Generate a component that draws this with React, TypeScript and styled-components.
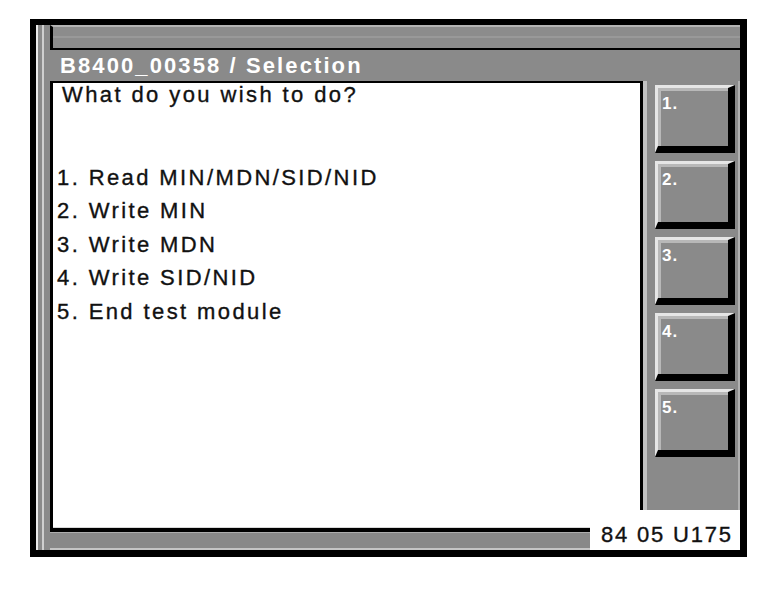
import React from "react";
import styled, { createGlobalStyle } from "styled-components";

const GlobalStyle = createGlobalStyle`
  html, body {
    margin: 0;
    padding: 0;
    background: #fff;
  }
  body {
    font-family: "Liberation Sans", Arial, sans-serif;
  }
`;

const Frame = styled.div`
  box-sizing: content-box;
  margin: 19px 0 0 30px;
  width: 704px;
  height: 525px;
  border-style: solid;
  border-color: #000;
  border-width: 6px 7px 7px 6px;
  display: flex;
  background: #8a8a8a;
`;

const Stripes = styled.div`
  flex: none;
  width: 14px;
  background: linear-gradient(
    to right,
    #ececec 0 2px,
    #8a8a8a 2px 6px,
    #cfcfcf 6px 8px,
    #8a8a8a 8px 14px
  );
`;

const Main = styled.div`
  position: relative;
  flex: 1;
  min-width: 0;
  display: flex;
  flex-direction: column;
`;

const TopBar = styled.div`
  flex: none;
  height: 21px;
  border-top: 2px solid #b4b4b4;
  border-bottom: 2px solid #000;
  border-left: 3px solid #000;
  background: linear-gradient(#8c8c8c 0 9px, #999 9px 11px, #8c8c8c 11px);
`;

const TitleBar = styled.div`
  flex: none;
  height: 31px;
  line-height: 31px;
  padding-left: 10px;
  background: #8a8a8a;
  color: #fff;
  font-weight: bold;
  font-size: 22px;
  letter-spacing: 2.1px;
  white-space: nowrap;
`;

const Body = styled.div`
  flex: 1;
  min-height: 0;
  display: flex;
`;

const Content = styled.div`
  flex: 1;
  background: #fff;
  border-style: solid;
  border-color: #000;
  border-width: 2px 3px 4px 3px;
  box-shadow: inset 0 -1px 0 #d8d8d8;
  color: #111;
  font-size: 22px;
  letter-spacing: 2.4px;
  -webkit-text-stroke: 0.35px #111;
  white-space: nowrap;
`;

const Question = styled.div`
  line-height: 24px;
  padding-left: 9px;
`;

const Options = styled.ol`
  list-style: none;
  margin: 54px 0 0;
  padding: 0 0 0 4px;
  line-height: 33.4px;
`;

const Panel = styled.div`
  flex: none;
  box-sizing: border-box;
  width: 97px;
  border-left: 4px solid #c2c2c2;
  border-right: 2px solid #b0b0b0;
  background: #8a8a8a;
  padding: 4px 3px 0 8px;
  display: flex;
  flex-direction: column;
  gap: 8px;
`;

const FKey = styled.button`
  box-sizing: border-box;
  width: 80px;
  height: 68px;
  margin: 0;
  border-style: solid;
  border-width: 3px 7px 7px 3px;
  border-color: #e6e6e6 #000 #000 #e6e6e6;
  box-shadow: inset 3px 3px 0 #b8b8b8;
  background: #8a8a8a;
  padding: 7px 0 0 4px;
  text-align: left;
  color: #fff;
  font-family: "Liberation Sans", Arial, sans-serif;
  font-weight: bold;
  font-size: 17px;
  line-height: 17px;
  letter-spacing: 1px;
  display: flex;
  align-items: flex-start;
  cursor: pointer;
`;

const BottomBand = styled.div`
  flex: none;
  height: 15px;
  border-top: 1px solid #adadad;
  border-bottom: 2px solid #c4c4c4;
  background: #888;
`;

const CodeLabel = styled.div`
  position: absolute;
  right: 0;
  bottom: 0;
  box-sizing: border-box;
  width: 150px;
  height: 40px;
  background: #fff;
  padding: 10px 0 0 11px;
  color: #111;
  font-size: 22px;
  line-height: 30px;
  letter-spacing: 1.8px;
  -webkit-text-stroke: 0.35px #111;
  white-space: nowrap;
`;

const options = [
  "1. Read MIN/MDN/SID/NID",
  "2. Write MIN",
  "3. Write MDN",
  "4. Write SID/NID",
  "5. End test module",
];

export default function App() {
  return (
    <>
      <GlobalStyle />
      <Frame>
        <Stripes />
        <Main>
          <TopBar />
          <TitleBar>B8400_00358 / Selection</TitleBar>
          <Body>
            <Content>
              <Question>What do you wish to do?</Question>
              <Options>
                {options.map((o) => (
                  <li key={o}>{o}</li>
                ))}
              </Options>
            </Content>
            <Panel>
              {[1, 2, 3, 4, 5].map((n) => (
                <FKey key={n}>{n}.</FKey>
              ))}
            </Panel>
          </Body>
          <BottomBand />
          <CodeLabel>84 05 U175</CodeLabel>
        </Main>
      </Frame>
    </>
  );
}
